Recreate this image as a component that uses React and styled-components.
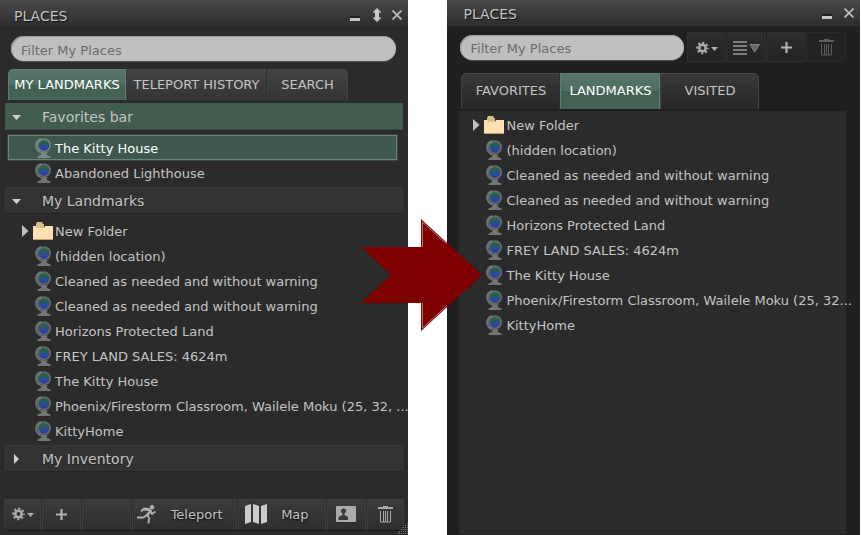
import React from "react";
import styled, { createGlobalStyle, css } from "styled-components";

const GlobalStyle = createGlobalStyle`
  *, *::before, *::after { box-sizing: border-box; }
  body {
    margin: 0;
    background: #fff;
    color: #c4c4c4;
    font-family: "DejaVu Sans", sans-serif;
    font-size: 13px;
  }
  button, input { font: inherit; color: inherit; }
  button { margin: 0; padding: 0; border: 0; background: none; text-align: left; }
  svg { display: block; flex: none; }
`;

const Page = styled.main`
  position: relative;
  display: grid;
  grid-template-columns: minmax(0, 408fr) 39px minmax(0, 413fr);
  min-height: 100vh;
`;

const Window = styled.section`
  display: flex;
  flex-direction: column;
  position: relative;
  background: ${(p) => (p.$dark ? "#1f1f1f" : "#2b2b2b")};
  grid-column: ${(p) => (p.$dark ? 3 : 1)};
  margin-right: ${(p) => (p.$dark ? "1px" : "0")};
`;

const TitleBar = styled.header`
  display: flex;
  align-items: center;
  height: ${(p) => (p.$tall ? "29px" : "27px")};
  padding: ${(p) => (p.$tall ? "3px 1px 0 14px" : "1px 1px 0 16px")};
  background: linear-gradient(#494949, #2c2c2c);
  border-bottom: 1px solid #222;
`;

const Title = styled.h1`
  flex: 1;
  margin: 0;
  font-size: 14px;
  font-weight: 400;
  line-height: 20px;
  text-shadow: 1px 1px 1px #111;
`;

const WindowButton = styled.button`
  display: grid;
  place-items: center;
  width: ${(p) => (p.$wide ? "24px" : "20px")};
  height: 20px;
  padding-bottom: 2px;
`;

const FilterRow = styled.div`
  display: flex;
  align-items: center;
  padding: ${(p) => (p.$dark ? "5px 14px 0 13px" : "7px 12px 0 11px")};
  gap: 3px;
`;

const Filter = styled.input`
  flex: 1;
  min-width: 0;
  height: 25px;
  padding: ${(p) => (p.$dark ? "2px" : "4px")} 10px 0;
  border: 0;
  border-radius: 13px;
  background: #bfbfbf;
  box-shadow: inset 1px 1px 1px #999, 0 1px 1px #555;
  color: #333;
  outline: 0;
  &::placeholder { color: #6c6c6c; opacity: 1; }
`;

const raised = css`
  background: linear-gradient(#3b3b3b, #2f2f2f);
  border: 1px solid #3d3d3d;
  border-bottom-color: #292929;
  box-shadow: 0 1px 0 #1d1d1d;
`;

const TinyTools = styled.div`
  display: flex;
  gap: 1px;
`;

const ToolButton = styled.button`
  ${raised}
  display: flex;
  align-items: center;
  justify-content: center;
  width: 39px;
  height: 30px;
  padding-top: 1px;
  ${(p) => p.$dark && "background: linear-gradient(#2d2d2d, #232323); border-color: #303030;"}
  &:disabled { background: #222; border-color: #292929; }
  &:last-child { border-bottom-right-radius: 5px; }
`;

const Tabs = styled.div`
  display: flex;
  padding-left: ${(p) => (p.$dark ? "14px" : "8px")};
  margin-top: ${(p) => (p.$dark ? "11px" : "8px")};
`;

const Tab = styled.button`
  width: ${(p) => p.$width};
  height: ${(p) => (p.$dark ? "36px" : "31px")};
  padding-bottom: 2px;
  text-align: center;
  white-space: nowrap;
  border: 1px solid #484848;
  border-left-color: #3f3f3f;
  border-right-color: #303030;
  border-bottom: 0;
  background: ${(p) =>
    p.$dark ? "linear-gradient(#393939, #272727)" : "linear-gradient(#444, #343434)"};
  &:first-child { border-top-left-radius: 5px; }
  &:last-child { border-top-right-radius: 5px; border-right-color: #444; }
  &[aria-selected="true"] {
    color: #fff;
    border-color: #5f7e72;
    background: linear-gradient(#58766b, #4d6e61 48%, #426052 50%, #456457);
  }
`;

const Accordion = styled.div`
  flex: 1;
  padding: 3px 5px 0;
`;

const SectionHeader = styled.button`
  display: flex;
  align-items: center;
  width: 100%;
  height: 27px;
  padding: 1px 6px 0;
  gap: 20px;
  font-size: 14px;
  line-height: 20px;
  border: 1px solid #383838;
  border-bottom-color: #242424;
  background: #333;
  text-shadow: 0 1px 1px #222;
  ${(p) => p.$active && "background: #425d50; border-color: #425d50; border-bottom-color: #36483f; text-shadow: none;"}
`;

const List = styled.ul`
  list-style: none;
  margin: 0;
  padding: ${(p) => p.$pad};
`;

const Item = styled.button`
  display: flex;
  align-items: center;
  width: 100%;
  height: 25px;
  padding: 0 0 0 13px;
  border: 1px solid transparent;
  ${(p) =>
    p.$selected &&
    "color: #fff; background: #3e584e; border-color: #6c8279; box-shadow: 0 0 0 1px #34463e;"}
`;

const ItemArrow = styled.span`
  width: 11px;
  flex: none;
`;

const ItemIcon = styled.span`
  width: 22px;
  flex: none;
`;

const ItemLabel = styled.span`
  flex: none;
  padding-top: 3px;
  line-height: 20px;
  white-space: nowrap;
`;

const Toolbar = styled.footer`
  display: flex;
  gap: 1px;
  margin: 0 5px 5px 4px;
`;

const ActionButton = styled(ToolButton)`
  flex: 0 1 ${(p) => p.$size}px;
  min-width: 0;
  gap: 14px;
  height: 31px;
  padding: 0 ${(p) => (p.$labelled ? "10px" : "0")} 1px 0;
  text-shadow: 0 1px 2px #000;
  &:first-child { border-bottom-left-radius: 5px; }
  ${(p) => p.$labelled && "flex-grow: 1;"}
`;

const Grip = styled.svg`
  position: absolute;
  right: 0;
  bottom: 0;
`;

const ListPanel = styled.div`
  flex: 1;
  margin: 2px 14px 1px 12px;
  background: #2b2b2b;
`;

const MigrationArrow = styled.svg`
  position: absolute;
  left: calc((100% - 39px) * 408 / 821 - 47px);
  top: 219px;
  pointer-events: none;
`;

const Globe = () => (
  <svg width="18" height="20" viewBox="0 0 18 20" aria-hidden="true">
    <defs>
      <linearGradient id="earth" x1="0" y1="0" x2="0" y2="1">
        <stop offset="0" stopColor="#2b6647" />
        <stop offset=".4" stopColor="#265862" />
        <stop offset=".7" stopColor="#2a46a6" />
        <stop offset="1" stopColor="#3036a0" />
      </linearGradient>
    </defs>
    <path d="M6 .8C2.400 2.200.8 5 1 8c.3 3.200 2 5.200 4.500 6.200" fill="none" stroke="#a2aaa8" strokeOpacity=".55" strokeWidth="1.800" />
    <circle cx="9" cy="7.300" r="7" fill="#a2aaa8" fillOpacity=".5" />
    <circle cx="9" cy="7.300" r="5.400" fill="url(#earth)" />
    <path d="M4 14.200h9L11.500 16l.5 1 3.500 1.500V20H2.500v-1.500L6 17l.5-1z" fill="#a2aaa8" fillOpacity=".6" />
  </svg>
);

const Folder = () => (
  <svg width="20" height="18" viewBox="0 0 20 18" aria-hidden="true">
    <path d="M3 7V2l1-2h5l1 2h1v5z" fill="#d6c08d" />
    <path d="M0 4h3l1 2h7l1-2h8v14H0z" fill="#ffe0b0" />
    <path d="M0 17h20v1H0z" fill="#b79f77" />
  </svg>
);

const Triangle = () => (
  <svg width="9" height="12" viewBox="0 0 9 12" aria-hidden="true">
    <path d="M0 0l6.500 6L0 12z" fill="#c0c0c0" />
  </svg>
);

const HeaderTriangle = ({ open }) => (
  <svg width="10" height="10" viewBox="0 0 10 10" aria-hidden="true">
    <path d={open ? "M0 3h9L4.500 8z" : "M2 0l5 5-5 5z"} fill="#d0d0d0" />
  </svg>
);

const Gear = () => (
  <svg width="22" height="14" viewBox="0 0 22 14" aria-hidden="true">
    <circle cx="6.500" cy="7" r="3.200" fill="none" stroke="#acacac" strokeWidth="2.500" />
    <circle cx="6.500" cy="7" r="5.300" fill="none" stroke="#acacac" strokeWidth="2" strokeDasharray="2.100 2.060" strokeDashoffset="1" />
    <path d="M15 6h7l-3.500 4z" fill="#acacac" />
  </svg>
);

const Plus = () => (
  <svg width="11" height="11" viewBox="0 0 11 11" aria-hidden="true">
    <path d="M5.500 0v11M0 5.500h11" stroke="#b2b2b2" strokeWidth="2.200" />
  </svg>
);

const Lines = () => (
  <svg width="27" height="14" viewBox="0 0 27 14" aria-hidden="true">
    <path d="M0 1h14M0 5h14M0 9h14M0 13h14" stroke="#7c7c7c" strokeWidth="2" />
    <path d="M17 3.500h9.500L21.700 11z" fill="#666" stroke="#808080" />
  </svg>
);

const Trash = ({ color }) => (
  <svg width="15" height="17" viewBox="0 0 15 17" aria-hidden="true">
    <path d="M0 1h5V0h5v1h5v2H0z" fill={color} />
    <path d="M2.500 5v11h10V5M5.500 5v11M7.500 5v11M9.500 5v11" fill="none" stroke={color} />
  </svg>
);

const Runner = () => (
  <svg width="20" height="19" viewBox="0 0 20 19" aria-hidden="true">
    <circle cx="15" cy="2.300" r="2.200" fill="#b0b0b0" />
    <path d="M6.500 4l5 .5 2 1.500-4 5" fill="none" stroke="#b0b0b0" strokeWidth="2.800" strokeLinejoin="round" />
    <path d="M13 5.500l2 3.500 3.500-2.500M7 3.500L4 6.500M9.500 9.500l2.800 3.500-1 5.500M10 10l-3.500 2.500H0" fill="none" stroke="#b0b0b0" strokeWidth="1.800" strokeLinejoin="round" />
  </svg>
);

const MapIcon = () => (
  <svg width="22" height="20" viewBox="0 0 22 20" aria-hidden="true">
    <path d="M0 2l6-2v18l-6 2zM8 0l6 2v18l-6-2zM16 2l6-2v18l-6 2z" fill="#cbcbcb" />
  </svg>
);

const ProfileCard = () => (
  <svg width="20" height="16" viewBox="0 0 20 16" aria-hidden="true">
    <rect width="20" height="16" rx="1" fill="#ababab" />
    <circle cx="7.500" cy="5" r="2.500" fill="#3a3a3a" />
    <path d="M6.500 6h2v3l3.500 2v3H2.500v-3l4-2z" fill="#3a3a3a" />
  </svg>
);

const Minimize = () => (
  <svg width="10" height="14" viewBox="0 0 10 14" aria-hidden="true">
    <path d="M0 8h10v2H0z" fill="#222" />
    <path d="M0 10h10v3H0z" fill="#c6c6c6" />
  </svg>
);

const UpDown = () => (
  <svg width="10" height="14" viewBox="0 0 10 14" aria-hidden="true">
    <path d="M5 0l4.500 4.500H7v5h2.500L5 14 .5 9.500H3v-5H.5z" fill="#c9c9c9" />
  </svg>
);

const Close = () => (
  <svg width="10" height="10" viewBox="0 0 10 10" aria-hidden="true">
    <path d="M.5.5l9 9M9.500.5l-9 9" stroke="#b9b9b9" strokeWidth="1.800" />
  </svg>
);

const landmarks = [
  "(hidden location)",
  "Cleaned as needed and without warning",
  "Cleaned as needed and without warning",
  "Horizons Protected Land",
  "FREY LAND SALES: 4624m",
  "The Kitty House",
  "Phoenix/Firestorm Classroom, Wailele Moku",
  "KittyHome",
];

const GlobeSlot = styled.span`
  display: block;
  padding-left: 2px;
`;

function Place({ name, folder, selected }) {
  return (
    <li>
      <Item type="button" $selected={selected} aria-current={selected ? "true" : undefined}>
        <ItemArrow>{folder && <Triangle />}</ItemArrow>
        <ItemIcon>{folder ? <Folder /> : <GlobeSlot><Globe /></GlobeSlot>}</ItemIcon>
        <ItemLabel>{name}</ItemLabel>
      </Item>
    </li>
  );
}

function Landmarks({ pad, region }) {
  return (
    <List $pad={pad}>
      <Place name="New Folder" folder />
      {landmarks.map((name, i) => (
        <Place key={i} name={name.startsWith("Phoenix") ? `${name} ${region}` : name} />
      ))}
    </List>
  );
}

export default function App() {
  return (
    <>
      <GlobalStyle />
      <Page>
        <Window aria-label="Places, accordion layout">
          <TitleBar $tall>
            <Title>PLACES</Title>
            <WindowButton type="button" aria-label="Minimize" $wide><Minimize /></WindowButton>
            <WindowButton type="button" aria-label="Dock"><UpDown /></WindowButton>
            <WindowButton type="button" aria-label="Close"><Close /></WindowButton>
          </TitleBar>
          <FilterRow>
            <Filter type="text" aria-label="Filter My Places" placeholder="Filter My Places" />
          </FilterRow>
          <Tabs role="tablist">
            <Tab type="button" role="tab" aria-selected="true" $width="118px">MY LANDMARKS</Tab>
            <Tab type="button" role="tab" aria-selected="false" $width="141px">TELEPORT HISTORY</Tab>
            <Tab type="button" role="tab" aria-selected="false" $width="81px">SEARCH</Tab>
          </Tabs>
          <Accordion>
            <SectionHeader type="button" aria-expanded="true" $active>
              <HeaderTriangle open />Favorites bar
            </SectionHeader>
            <List $pad="5px 6px 2px 3px">
              <Place name="The Kitty House" selected />
              <Place name="Abandoned Lighthouse" />
            </List>
            <SectionHeader type="button" aria-expanded="true">
              <HeaderTriangle open />My Landmarks
            </SectionHeader>
            <Landmarks pad="4px 4px 2px 3px" region="(25, 32, ..." />
            <SectionHeader type="button" aria-expanded="false">
              <HeaderTriangle />My Inventory
            </SectionHeader>
          </Accordion>
          <Toolbar>
            <ActionButton type="button" aria-label="Options" $size={37}><Gear /></ActionButton>
            <ActionButton type="button" aria-label="Add" $size={39}><Plus /></ActionButton>
            <ActionButton as="div" $size={49} />
            <ActionButton type="button" $size={105} $labelled><Runner />Teleport</ActionButton>
            <ActionButton type="button" $size={87} $labelled><MapIcon />Map</ActionButton>
            <ActionButton type="button" aria-label="Profile" $size={39}><ProfileCard /></ActionButton>
            <ActionButton type="button" aria-label="Delete" $size={37}><Trash color="#aaa" /></ActionButton>
          </Toolbar>
          <Grip width="12" height="12" viewBox="0 0 12 12" aria-hidden="true">
            <path d="M11.500 0v12M9.500 2v10M7.500 4v8M5.500 6v6M3.500 8v4M1.500 10v2" stroke="#777" strokeDasharray="1 1" />
          </Grip>
        </Window>

        <Window $dark aria-label="Places, tabbed layout">
          <TitleBar>
            <Title>PLACES</Title>
            <WindowButton type="button" aria-label="Minimize" $wide><Minimize /></WindowButton>
            <WindowButton type="button" aria-label="Close"><Close /></WindowButton>
          </TitleBar>
          <FilterRow $dark>
            <Filter $dark type="text" aria-label="Filter My Places" placeholder="Filter My Places" />
            <TinyTools>
              <ToolButton $dark type="button" aria-label="Options"><Gear /></ToolButton>
              <ToolButton $dark type="button" aria-label="Sort"><Lines /></ToolButton>
              <ToolButton $dark type="button" aria-label="Add"><Plus /></ToolButton>
              <ToolButton $dark type="button" aria-label="Delete" disabled><Trash color="#5c5c5c" /></ToolButton>
            </TinyTools>
          </FilterRow>
          <Tabs $dark role="tablist">
            <Tab $dark type="button" role="tab" aria-selected="false" $width="99px">FAVORITES</Tab>
            <Tab $dark type="button" role="tab" aria-selected="true" $width="100px">LANDMARKS</Tab>
            <Tab $dark type="button" role="tab" aria-selected="false" $width="99px">VISITED</Tab>
          </Tabs>
          <ListPanel>
            <Landmarks pad="1px 4px 0 0" region="(25, 32..." />
          </ListPanel>
        </Window>

        <MigrationArrow width="121" height="112" viewBox="0 0 121 112" aria-hidden="true">
          <path d="M0 28h60V0l61 56-61 56V84H0l30-28z" fill="#7f0000" />
          <path d="M61.500 28V3l24 22M61.500 84v25l24-22" fill="none" stroke="#b77373" />
        </MigrationArrow>
      </Page>
    </>
  );
}
